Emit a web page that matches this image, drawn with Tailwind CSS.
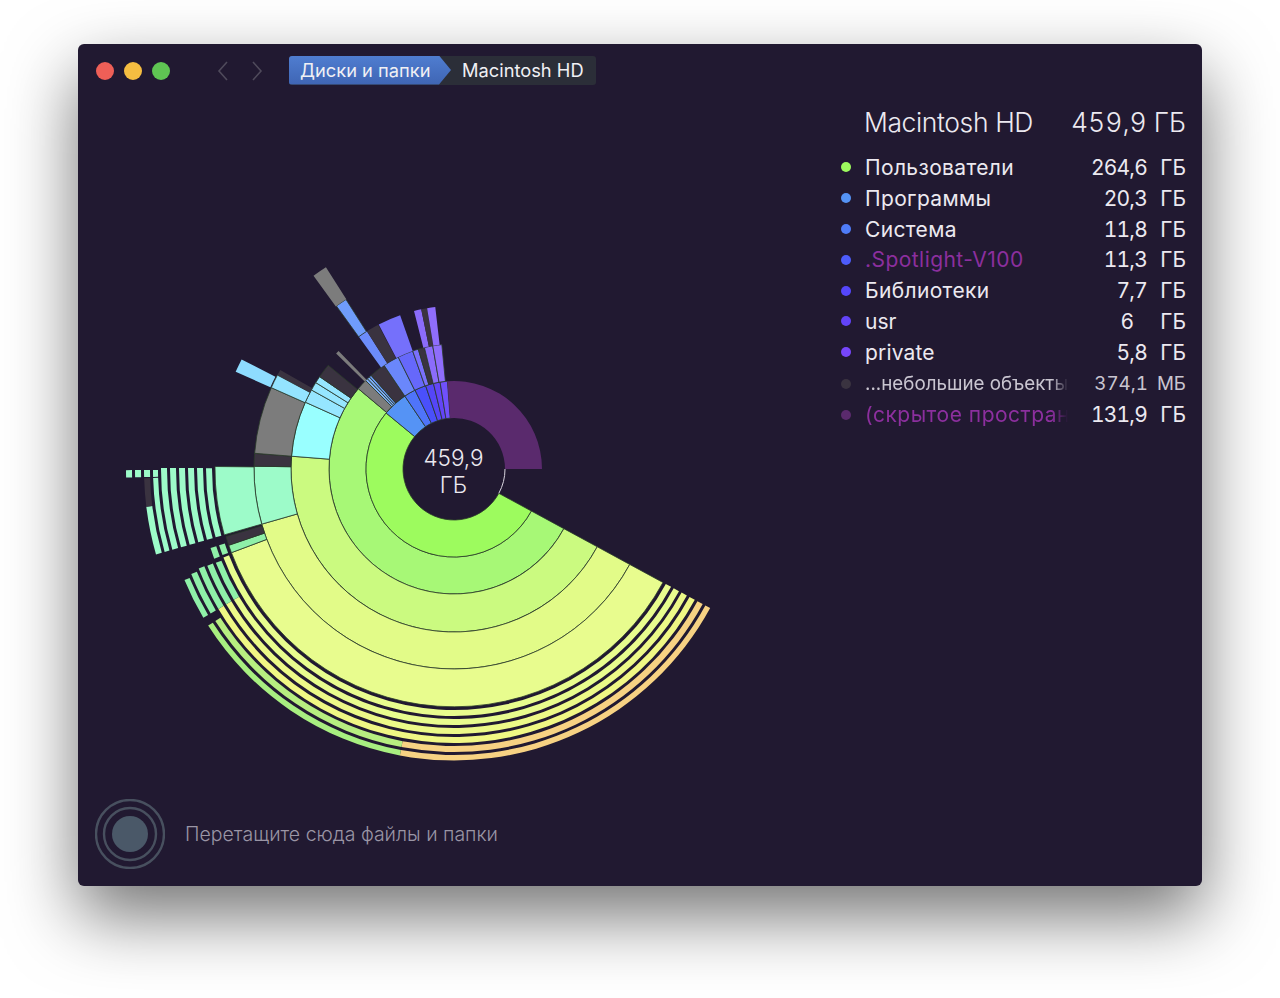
<!DOCTYPE html>
<html lang="ru">

<head>
  <meta charset="UTF-8" />
  <script src="https://cdn.jsdelivr.net/npm/@tailwindcss/browser@4"></script>
  <title>Диски и папки</title>
</head>

<body class="bg-white w-[1280px] h-[998px] overflow-hidden font-[Inter,sans-serif]">
  <div class="pt-[44px] pl-[78px]">
    <div class="relative flex flex-col w-[1124px] h-[842px] bg-[#211931] rounded-[6px] shadow-[0_30px_70px_rgba(0,0,0,0.55)]">
      <!-- sunburst -->
      <svg id="chart" class="absolute inset-0 w-full h-full" viewBox="78 44 1124 842">
        <text x="453.5" y="466" text-anchor="middle" font-size="22.5" font-weight="300" fill="#ece9f0">459,9</text>
        <text x="453.5" y="493" text-anchor="middle" font-size="22.5" font-weight="300" fill="#ece9f0">ГБ</text>
      </svg>

      <div class="relative flex justify-between items-start h-[55px]">
        <div class="flex items-center h-[54px] pl-[18px]">
          <span class="w-[18px] h-[18px] rounded-full bg-[#ee5f57]"></span>
          <span class="w-[18px] h-[18px] rounded-full bg-[#f5bd41] ml-[10px]"></span>
          <span class="w-[18px] h-[18px] rounded-full bg-[#5fc553] ml-[10px]"></span>
          <svg class="ml-[46px] w-[14px] h-[22px]" viewBox="0 0 14 22" fill="none" stroke="#4f4a5b" stroke-width="1.6">
            <path d="M11 2 L3 11 L11 20" />
          </svg>
          <svg class="ml-[20px] w-[14px] h-[22px]" viewBox="0 0 14 22" fill="none" stroke="#4f4a5b" stroke-width="1.6">
            <path d="M3 2 L11 11 L3 20" />
          </svg>
          <div class="relative flex items-center ml-[25px] w-[307px] h-[29px] mb-[2px] pt-[1px] rounded-[3px] bg-[#2b2e38] text-[18.3px] text-[#f0f0f4]">
            <div class="absolute inset-y-0 left-0 w-[162px] rounded-l-[3px] bg-gradient-to-b from-[#4f7dd0] to-[#3f65b4] [clip-path:polygon(0_0,150px_0,162px_50%,150px_100%,0_100%)]"></div>
            <span class="relative ml-[11px] w-[162px]">Диски и папки</span>
            <span class="relative">Macintosh HD</span>
          </div>
        </div>
      </div>

      <!-- legend -->
      <div class="relative self-end w-[361px] pr-[16px] text-[21px] text-[#ece9f0] leading-[31px]">
        <div class="flex justify-between items-center ml-[23px] h-[46px] text-[26.5px] font-light">
          <span class="tracking-[-0.4px]">Macintosh HD</span>
          <span class="tabular-nums">459,9 ГБ</span>
        </div>
        <div class="flex flex-col mt-[7px] [&>div]:flex [&>div]:items-center">
          <div class="h-[30.8px]"><span class="w-[10px] h-[10px] rounded-full bg-[#9dfb5e] mr-[14px]"></span><span class="flex-1 tracking-[0.35px]">Пользователи</span><span class="tabular-nums tracking-[-0.8px]">264,6</span><span class="w-[39px] text-right">ГБ</span></div>
          <div class="h-[30.8px]"><span class="w-[10px] h-[10px] rounded-full bg-[#5593f5] mr-[14px]"></span><span class="flex-1 tracking-[0.35px]">Программы</span><span class="tabular-nums tracking-[-0.8px]">20,3</span><span class="w-[39px] text-right">ГБ</span></div>
          <div class="h-[30.8px]"><span class="w-[10px] h-[10px] rounded-full bg-[#4f7cf8] mr-[14px]"></span><span class="flex-1 tracking-[0.35px]">Система</span><span class="tabular-nums tracking-[-0.8px]">11,8</span><span class="w-[39px] text-right">ГБ</span></div>
          <div class="h-[30.8px]"><span class="w-[10px] h-[10px] rounded-full bg-[#4d5cfb] mr-[14px]"></span><span class="flex-1 tracking-[0.45px] text-[#8c2f9e]">.Spotlight-V100</span><span class="tabular-nums tracking-[-0.8px]">11,3</span><span class="w-[39px] text-right">ГБ</span></div>
          <div class="h-[30.8px]"><span class="w-[10px] h-[10px] rounded-full bg-[#5546fb] mr-[14px]"></span><span class="flex-1 tracking-[0.35px]">Библиотеки</span><span class="tabular-nums tracking-[-0.8px]">7,7</span><span class="w-[39px] text-right">ГБ</span></div>
          <div class="h-[30.8px]"><span class="w-[10px] h-[10px] rounded-full bg-[#6243f8] mr-[14px]"></span><span class="flex-1">usr</span><span class="mr-[13px] tabular-nums">6</span><span class="w-[39px] text-right">ГБ</span></div>
          <div class="h-[30.8px]"><span class="w-[10px] h-[10px] rounded-full bg-[#7746fb] mr-[14px]"></span><span class="flex-1 tracking-[0.15px]">private</span><span class="tabular-nums tracking-[-0.8px]">5,8</span><span class="w-[39px] text-right">ГБ</span></div>
          <div class="h-[32px] text-[18.8px] text-[#c9c5d0]"><span class="w-[10px] h-[10px] rounded-full bg-[#3a3340] mr-[14px]"></span><span class="w-[203px] shrink-0 overflow-hidden whitespace-nowrap [mask-image:linear-gradient(to_right,black_92%,transparent)]">...небольшие объекты</span><span class="flex-1 text-right tabular-nums">374,1</span><span class="w-[38px] text-right">МБ</span></div>
          <div class="h-[30px]"><span class="w-[10px] h-[10px] rounded-full bg-[#5a2a6d] mr-[14px]"></span><span class="w-[203px] shrink-0 overflow-hidden whitespace-nowrap tracking-[0.5px] text-[#8c2f9e] [mask-image:linear-gradient(to_right,black_92%,transparent)]">(скрытое простран</span><span class="flex-1 text-right tabular-nums tracking-[-0.8px]">131,9</span><span class="w-[39px] text-right">ГБ</span></div>
        </div>
      </div>

      <!-- drop zone -->
      <div class="relative flex items-center mt-auto mb-[17px] ml-[17px]">
        <svg class="w-[70px] h-[70px]" viewBox="0 0 70 70" fill="none" stroke="#48505f" stroke-width="2.4">
          <circle cx="35" cy="35" r="34" />
          <circle cx="35" cy="35" r="26" />
          <circle cx="35" cy="35" r="18" fill="#4a5868" stroke="none" />
        </svg>
        <span class="ml-[20px] mt-[2px] text-[19.5px] font-light text-[#9a95a5]">Перетащите сюда файлы и папки</span>
      </div>
    </div>
  </div>

  <script>
    const cx = 454, cy = 469;
    const dark = "#3a3340", grey = "#7c7c7c", sea = "#9dfbc9", bar = "#8ff0a8";
    // [r0, r1, from, to, colour], angles clockwise from the top
    const sectors = [
      [88, 125, 118.5, 310, "#a7f876"],
      [51, 88, 118.5, 309.5, "#9dfb5e"],
      [51, 88, -50.5, -34, "#5593f5"],
      [51, 88, -34, -26.3, "#4f74fa"],
      [51, 88, -26.3, -18.8, "#4a50fb"],
      [51, 88, -18.8, -13.5, "#5546f8"],
      [51, 88, -13.5, -9.1, "#6345f8"],
      [51, 88, -9.1, -4.3, "#7050fc"],
      [51, 88, -4.3, 90, "#5a2a6d", 1],

      [88, 125, -50, -45, grey],
      [88, 125, -45, -43.8, "#7fb0f8"],
      [88, 125, -43.8, -42.6, "#7fb0f8"],
      [88, 125, -42.6, -41.5, "#6c9cf8"],
      [88, 125, -41.5, -34, dark],
      [88, 125, -34, -26.5, "#6a87fb"],
      [88, 125, -26.5, -19.3, "#6668fb"],
      [88, 125, -19.3, -16.6, "#7a70fc"],
      [88, 125, -16.6, -13.7, dark],
      [88, 125, -13.7, -9.8, "#8b6cfb"],
      [88, 125, -9.8, -5.6, "#8f6dfc"],

      [125, 163, 118.5, 274.5, "#cbfa80"],
      [125, 163, -85.5, -65.8, "#99ffff"],
      [125, 163, -65.8, -61, "#96e6ff"],
      [125, 163, -61, -58, "#96e6ff"],
      [125, 163, -58, -55.5, "#96e6ff"],
      [125, 163, -55.5, -50.5, dark],
      [125, 165, -45.6, -44.4, grey, 1],
      [125, 163, -35.7, -32.3, "#6c8cfb", 1],
      [125, 163, -32.3, -27.7, dark, 1],
      [125, 163, -27.5, -19.3, "#7570fb", 1],
      [125, 163, -14.2, -11.6, "#8b6cfb", 1],
      [125, 163, -11.6, -9.5, dark, 1],
      [125, 163, -9.5, -6.6, "#8f6dfc", 1],

      [163, 200, 118.5, 254, "#e2fb88"],
      [163, 200, 254, 270.8, sea],
      [163, 200, 270.8, 274.5, dark],
      [163, 200, -85.5, -66, grey],
      [163, 200, -66, -62, "#94e4ff"],
      [163, 200, -62, -60.3, dark, 1],
      [163, 201, -35.8, -32.5, "#6f9cfb"],

      [200, 237.8, 118.5, 249.4, "#e8fc8e"],
      [200, 237.8, 249.4, 251.3, "#8ff0a8"],
      [200, 237.8, 251.3, 253.5, dark],
      [200, 239, 254, 270.6, sea],
      [201, 239, -36, -32.4, grey, 1],
      [201, 239, -66, -62.7, "#8edcff", 1],

      // thin outer rings, lower part
      [241, 247, 118.5, 249, "#e8fc8e", 1],
      [250, 256, 118.5, 239.3, "#e8fc8e", 1],
      [259, 265, 118.5, 239.3, "#ecf988", 1],
      [268, 274, 118.5, 239.3, "#f0f784", 1],
      [277, 283, 118.5, 190.7, "#f7d283", 1],
      [286, 291.5, 118.5, 190.7, "#f7d283", 1],
      [277, 283, 190.7, 237.5, "#b7ee80", 1],
      [286, 291.5, 190.7, 237.5, "#a8ef80", 1],

      // bars hanging off the yellow rings
      [241, 247, 249.6, 252, bar, 1],
      [250, 256, 239.3, 248.5, bar, 1],
      [250, 256, 249.5, 252, bar, 1],
      [259, 265, 239.3, 248.6, bar, 1],
      [268, 274, 239.3, 248.7, bar, 1],
      [277, 283, 239.3, 248.2, bar, 1],
      [286, 291.5, 239.3, 247.6, bar, 1],

      // outer bars of the left block
      [242, 248, 254, 270.2, sea, 1],
      [251, 257, 254, 270.2, sea, 1],
      [260, 266, 254, 270.2, sea, 1],
      [269, 275, 254, 270.2, sea, 1],
      [278, 284, 254, 270.2, sea, 1],
      [287, 293, 254, 270.2, sea, 1],
      [296, 301, 254, 268.3, sea, 1],
      [296, 301, 268.5, 269.8, sea, 1],
      [304, 310, 254, 263, sea, 1],
      [304, 310, 263, 268.3, dark, 1],
      [304, 310, 268.5, 269.8, sea, 1],
      [313, 319, 268.5, 269.8, sea, 1],
      [322, 328, 268.5, 269.8, sea, 1],
    ];

    function pt(r, a) {
      const t = a * Math.PI / 180;
      return (cx + r * Math.sin(t)).toFixed(2) + " " + (cy - r * Math.cos(t)).toFixed(2);
    }

    function sectorPath(r0, r1, a0, a1) {
      const big = a1 - a0 > 180 ? 1 : 0;
      return "M" + pt(r0, a0) + " A" + r0 + " " + r0 + " 0 " + big + " 1 " + pt(r0, a1) +
        " L" + pt(r1, a1) + " A" + r1 + " " + r1 + " 0 " + big + " 0 " + pt(r1, a0) + " Z";
    }

    const svg = document.getElementById("chart");
    const ns = "http://www.w3.org/2000/svg";
    const first = svg.firstChild;
    sectors.forEach(function (s) {
      const p = document.createElementNS(ns, "path");
      p.setAttribute("d", sectorPath(s[0], s[1], s[2], s[3]));
      p.setAttribute("fill", s[4]);
      if (!s[5]) {
        p.setAttribute("stroke", "#2a3a2a");
        p.setAttribute("stroke-width", "0.8");
      }
      svg.insertBefore(p, first);
    });

    // light edge of the hole where the free space starts
    const edge = document.createElementNS(ns, "path");
    edge.setAttribute("d", "M" + pt(51, 90) + " A51 51 0 0 1 " + pt(51, 118.5));
    edge.setAttribute("fill", "none");
    edge.setAttribute("stroke", "#d8d4de");
    edge.setAttribute("stroke-width", "1");
    svg.insertBefore(edge, first);
  </script>
</body>

</html>
